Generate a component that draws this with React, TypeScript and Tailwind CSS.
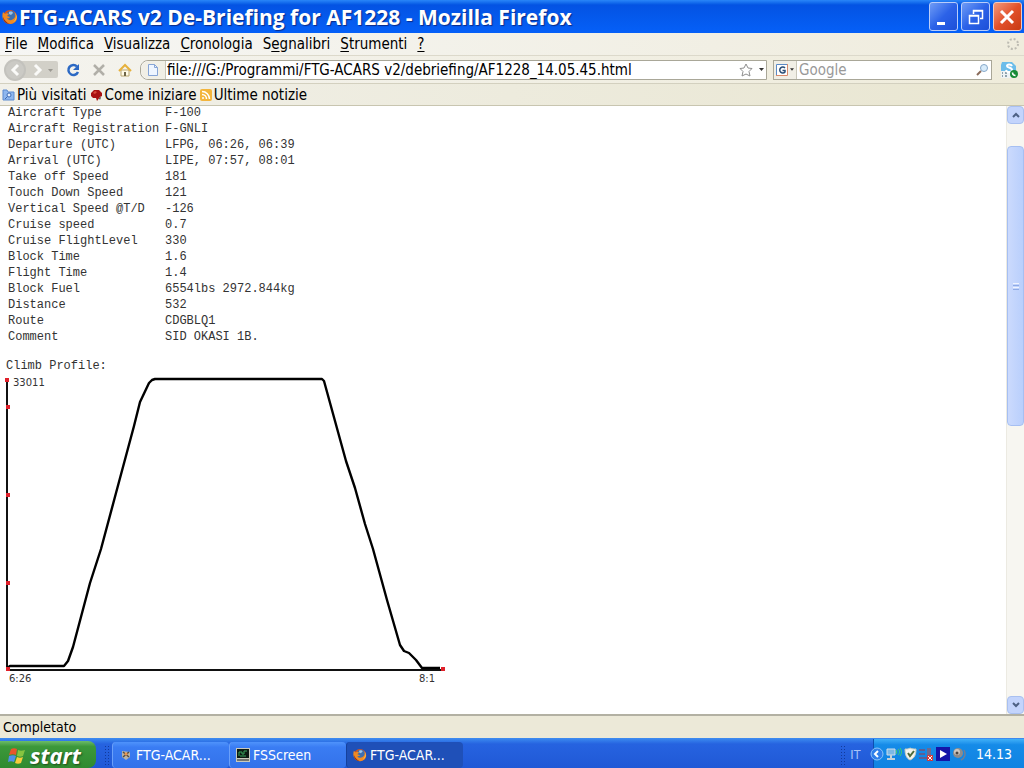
import type { ReactNode } from "react";

const flightData = [
  ["Aircraft Type", "F-100"],
  ["Aircraft Registration", "F-GNLI"],
  ["Departure (UTC)", "LFPG, 06:26, 06:39"],
  ["Arrival (UTC)", "LIPE, 07:57, 08:01"],
  ["Take off Speed", "181"],
  ["Touch Down Speed", "121"],
  ["Vertical Speed @T/D", "-126"],
  ["Cruise speed", "0.7"],
  ["Cruise FlightLevel", "330"],
  ["Block Time", "1.6"],
  ["Flight Time", "1.4"],
  ["Block Fuel", "6554lbs 2972.844kg"],
  ["Distance", "532"],
  ["Route", "CDGBLQ1"],
  ["Comment", "SID OKASI 1B."],
];

const menus = ["File", "Modifica", "Visualizza", "Cronologia", "Segnalibri", "Strumenti", "?"];
const accessKeys = [0, 0, 0, 0, 1, 0, 0];

const markers = [
  [3, 6],
  [4, 33],
  [4, 121],
  [4, 209],
  [4, 295],
  [439, 295],
];

function FirefoxIcon({ className }: { className: string }) {
  return (
    <svg viewBox="0 0 16 16" className={className} aria-hidden="true">
      <circle cx="8" cy="8" r="7" fill="#d9541a" />
      <circle cx="9" cy="7" r="5" fill="#3d6fb0" />
      <path d="M7 3c2-1 4 0 4 1L9 6 7 5z" fill="#9cc4e8" />
      <path d="M1 3l2 2c1-1 3-1 4 0L5 7c1 0 2 1 3 1-1 2-3 1-3 1 1 3 6 3 8-1 1-2 0-4-1-5 3 2 4 6 2 9-3 4-9 4-12 0C0 9 0 6 1 3z" fill="#f08a24" />
      <path d="M13 4c2 3 1 7-2 9 3-1 5-5 2-9z" fill="#ffd65a" />
      <path d="M1 8c0 4 3 7 7 7-3-1-6-4-7-7z" fill="#8e2a12" />
    </svg>
  );
}

function TitleBar() {
  return (
    <header className="flex h-[33px] shrink-0 items-center bg-linear-to-b from-[#2a86f8] via-[#0453e3] via-15% to-[#0560f8] pl-0.5 pr-1">
      <FirefoxIcon className="size-4 shrink-0" />
      <h1 className="min-w-0 flex-1 truncate pl-px font-['Open_Sans','Noto_Sans',sans-serif] text-[21px] leading-8 font-bold text-white [text-shadow:1px_1px_1px_#0a2a88]">
        FTG-ACARS v2 De-Briefing for AF1228 - Mozilla Firefox
      </h1>
      <div className="-mr-0.5 flex gap-[3px]">
        <button aria-label="Riduci a icona" className="size-[29px] rounded-[3px] border border-[#b9cdfa] bg-linear-to-br from-[#6f9bf5] via-[#2c62e8] to-[#1c4fd8]">
          <svg viewBox="0 0 27 27" className="size-full"><path d="M7 19h8v3H7z" fill="#fff" /></svg>
        </button>
        <button aria-label="Ripristina" className="size-[29px] rounded-[3px] border border-[#b9cdfa] bg-linear-to-br from-[#6f9bf5] via-[#2c62e8] to-[#1c4fd8]">
          <svg viewBox="0 0 27 27" className="size-full" fill="none" stroke="#fff">
            <path d="M11.500 11V7.500h9v8H18M11 8h10" strokeWidth="1.500" />
            <path d="M7.500 12.500h9v8h-9zM7 13h10" strokeWidth="1.500" />
          </svg>
        </button>
        <button aria-label="Chiudi" className="size-[29px] rounded-[3px] border border-[#f3c9bd] bg-linear-to-br from-[#f0977a] via-[#e2512a] to-[#c83a12]">
          <svg viewBox="0 0 27 27" className="size-full"><path d="M7 8l12 12M19 8L7 20" stroke="#fff" strokeWidth="3" /></svg>
        </button>
      </div>
    </header>
  );
}

function MenuBar() {
  return (
    <nav className="flex h-[23px] shrink-0 items-center justify-between border-b border-[#dcd9cb] bg-linear-to-r from-[#f6f6f4] to-[#efecdd] pr-1 pl-[5px]">
      <div className="flex gap-2.5">
        {menus.map((label, i) => (
          <button key={label}>
            {label.slice(0, accessKeys[i])}
            <span className="underline underline-offset-2">{label[accessKeys[i]]}</span>
            {label.slice(accessKeys[i] + 1)}
          </button>
        ))}
      </div>
      <svg viewBox="0 0 14 14" className="size-[14px]" aria-hidden="true">
        <circle cx="7" cy="7" r="5" fill="none" stroke="#bdbbb2" strokeWidth="2" strokeDasharray="2 1.930" />
      </svg>
    </nav>
  );
}

function BackForward() {
  return (
    <div className="relative flex h-[22px] w-[56px] shrink-0 items-center">
      <svg viewBox="0 0 56 22" className="size-full" aria-hidden="true">
        <rect x="6" y="2" width="50" height="17" rx="2" fill="#d2d0c8" />
        <circle cx="13" cy="11" r="11" fill="#c3c2bd" />
        <circle cx="13" cy="11" r="9" fill="#cbcac5" />
        <path d="M16 6l-5 5 5 5M33 6l5 5-5 5" fill="none" stroke="#fafaf8" strokeWidth="3" />
        <path d="M46 10h5l-2.500 3z" fill="#9b9992" />
      </svg>
      <button aria-label="Indietro" className="absolute inset-y-0 left-0 w-6" />
      <button aria-label="Avanti" className="absolute inset-y-0 left-7 w-7" />
    </div>
  );
}

function NavBar() {
  return (
    <div className="flex h-[28px] shrink-0 items-center border-b border-[#d3d0bf] bg-linear-to-r from-[#f4f3ee] to-[#efecdb] pr-1.5 pl-0.5">
      <BackForward />
      <button aria-label="Ricarica" className="ml-2">
        <svg viewBox="0 0 14 14" className="size-[14px]">
          <path d="M11 3.500A5 5 0 1 0 12 9" fill="none" stroke="#2c69c4" strokeWidth="2.500" />
          <path d="M13 1v6H7z" fill="#2c69c4" />
        </svg>
      </button>
      <button aria-label="Ferma" className="ml-3">
        <svg viewBox="0 0 14 14" className="size-[14px]"><path d="M2 2l10 10M12 2L2 12" stroke="#b1afa8" strokeWidth="2.500" /></svg>
      </button>
      <button aria-label="Pagina iniziale" className="ml-3">
        <svg viewBox="0 0 14 14" className="size-[14px]">
          <path d="M3 7h8v6H3z" fill="#fffbe8" stroke="#b9a671" />
          <path d="M1 8l6-6 6 6" fill="none" stroke="#e6b13c" strokeWidth="2" />
          <path d="M6 9h2v4H6z" fill="#6e6548" />
        </svg>
      </button>
      <div className="ml-2 flex h-5 min-w-0 flex-1 items-center rounded-l-lg border border-[#a9a798] bg-white">
        <span className="flex h-full w-[25px] shrink-0 items-center justify-center rounded-l-lg border-r border-[#c9c7ba] bg-[#f1efe6]">
          <svg viewBox="0 0 12 14" className="h-[14px] w-3" aria-hidden="true">
            <path d="M1.500 1.500h6l3 3v8h-9z" fill="#eef5ff" stroke="#87a5d6" />
            <path d="M7.500 1.500v3h3" fill="none" stroke="#87a5d6" />
          </svg>
        </span>
        <input
          aria-label="Indirizzo"
          defaultValue="file:///G:/Programmi/FTG-ACARS v2/debriefing/AF1228_14.05.45.html"
          className="h-full min-w-0 flex-1 bg-transparent pl-px outline-none"
        />
        <button aria-label="Aggiungi ai segnalibri">
          <svg viewBox="0 0 14 14" className="size-[14px]">
            <path d="M7 1l2 4 4 .5-3 3 1 4.500-4-2-4 2 1-4.500-3-3L5 5z" fill="#fff" stroke="#8e8e8e" />
          </svg>
        </button>
        <button aria-label="Cronologia indirizzi" className="pr-0.5 pl-1.5">
          <svg viewBox="0 0 5 3" className="h-[3px] w-[5px]"><path d="M0 0h5L2.500 3z" fill="#333" /></svg>
        </button>
      </div>
      <div className="ml-1.5 flex h-5 w-[219px] shrink-0 items-center border border-[#a9a798] bg-white">
        <button aria-label="Motore di ricerca" className="flex h-full w-[23px] shrink-0 items-center gap-0.5 border-r border-[#c9c7ba] bg-[#f1efe6] pl-0.5">
          <svg viewBox="0 0 12 12" className="size-3">
            <path d="M0 0h12v12H0z" fill="#fff" />
            <path d="M.5 12V.5H12" fill="none" stroke="#5b8ac6" />
            <path d="M11.500 0v11.500H0" fill="none" stroke="#d98a6a" />
            <path d="M9 4a3 3 0 1 0 0 4V6.500H6.500" fill="none" stroke="#2b4f78" strokeWidth="1.500" />
          </svg>
          <svg viewBox="0 0 5 3" className="h-[3px] w-1"><path d="M0 0h5L2.500 3z" fill="#333" /></svg>
        </button>
        <input aria-label="Cerca" placeholder="Google" className="h-full min-w-0 flex-1 pl-0.5 outline-none placeholder:text-[#999]" />
        <button aria-label="Avvia ricerca" className="pr-0.5">
          <svg viewBox="0 0 13 13" className="size-[13px]">
            <path d="M1 12l4-4" stroke="#8a6a5a" strokeWidth="2" />
            <circle cx="8" cy="5" r="3.500" fill="#d8ecfb" stroke="#86a8c9" />
          </svg>
        </button>
      </div>
      <button aria-label="Skype" className="ml-2">
        <svg viewBox="0 0 18 18" className="size-[18px]">
          <path d="M2 1h10l4 4v8l-3 3H5l-4-4V4z" fill="#6cbdea" />
          <path d="M1 10h10v7H1z" fill="#eef3f5" />
          <path d="M2 12h1M5 12h2M2 15h1M5 15h2" stroke="#8fa3ad" strokeWidth="2" />
          <path d="M12 5c-1-2-5-2-5 0s5 1 5 4-5 3-6 0" fill="none" stroke="#fff" strokeWidth="2" />
          <circle cx="14" cy="13" r="4" fill="#178a35" />
          <path d="M12.500 11.500c0 2 1 3 3 3" fill="none" stroke="#fff" strokeWidth="1.500" />
        </svg>
      </button>
    </div>
  );
}

function BookmarksBar() {
  return (
    <div className="flex h-[22px] shrink-0 items-center gap-[3px] border-b border-[#c8c5b0] bg-linear-to-r from-[#f1f0e9] to-[#e9e6d1] pl-0.5">
      <a href="#piu-visitati" className="flex items-center gap-0.5">
        <svg viewBox="0 0 13 12" className="h-3 w-[13px]" aria-hidden="true">
          <path d="M1 1h4l1 2h6v8H1z" fill="#8fb7ee" stroke="#5c8bd0" />
          <circle cx="7" cy="6" r="2" fill="#e5f0ff" stroke="#3f6cb4" />
          <path d="M5.500 7.500L3 10" stroke="#3f6cb4" />
        </svg>
        Più visitati
      </a>
      <a href="#come-iniziare" className="flex items-center gap-0.5">
        <svg viewBox="0 0 13 12" className="h-3 w-[13px]" aria-hidden="true">
          <path d="M1 4l3-3h5l3 3v3l-2 1-3 4-1-3H3L1 7z" fill="#a81212" />
          <path d="M3 4l2-2 2 1-2 2z" fill="#d84a3a" />
          <path d="M9 9l2-1-1 3z" fill="#333" />
        </svg>
        Come iniziare
      </a>
      <a href="#ultime-notizie" className="flex items-center gap-0.5">
        <svg viewBox="0 0 12 12" className="size-3" aria-hidden="true">
          <rect width="12" height="12" rx="2" fill="#f3b53d" />
          <circle cx="3" cy="9" r="1" fill="#fff" />
          <path d="M2 5.500a4.500 4.500 0 0 1 4.500 4.500M2 2.500a7.500 7.500 0 0 1 7.500 7.500" fill="none" stroke="#fff" strokeWidth="1.500" />
        </svg>
        Ultime notizie
      </a>
    </div>
  );
}

function ClimbProfile() {
  return (
    <svg viewBox="0 0 444 314" className="ml-1 block h-[314px] w-[444px]" role="img" aria-label="Climb Profile">
      <path d="M3 6v290h434" fill="none" stroke="#111" strokeWidth="2" />
      <polyline
        points="3,294 6,292 60,292 64,287 69,273 86,209 97,175 112,119 130,52 136,28 145,9 148,6 151,5 318,5 320,7 342,87 351,114 361,150 369,175 383,226 396,271 400,277 405,279 412,286 418,294 436,294"
        fill="none"
        stroke="#000"
        strokeWidth="2.400"
        strokeLinejoin="round"
      />
      {markers.map(([x, y]) => (
        <rect key={`${x}-${y}`} x={x - 2} y={y - 2} width="4" height="4" fill="#e0202a" />
      ))}
      <g fill="#333" className="font-['DejaVu_Sans',sans-serif] text-[10px]">
        <text x="9" y="12">33011</text>
        <text x="5" y="308">6:26</text>
        <text x="415" y="308">8:1</text>
      </g>
    </svg>
  );
}

function ScrollButton({ label, d }: { label: string; d: string }) {
  return (
    <button aria-label={label} className="flex h-[18px] w-full shrink-0 items-center justify-center rounded-sm border border-[#a9c0f0] bg-[#c3d4fc]">
      <svg viewBox="0 0 8 6" className="h-1.5 w-2"><path d={d} fill="none" stroke="#4d6185" strokeWidth="2" /></svg>
    </button>
  );
}

function Page() {
  return (
    <div className="flex min-h-0 flex-1 bg-white">
      <main className="min-w-0 flex-1 overflow-hidden font-['Liberation_Mono',monospace] text-xs text-[#333]">
        <table className="-mt-px ml-2 border-collapse">
          <tbody>
            {flightData.map(([label, value]) => (
              <tr key={label}>
                <th scope="row" className="w-[157px] p-0 text-left font-normal whitespace-nowrap">{label}</th>
                <td className="p-0 whitespace-nowrap">{value}</td>
              </tr>
            ))}
          </tbody>
        </table>
        <h2 className="mt-[13px] ml-1.5">Climb Profile:</h2>
        <ClimbProfile />
      </main>
      <div className="flex w-[18px] shrink-0 flex-col border-l border-[#eceae2] bg-[#f7f6f1]">
        <ScrollButton label="Scorri su" d="M1 5l3-3 3 3" />
        <div className="flex flex-1 flex-col pt-[22px]">
          <div className="flex h-[280px] flex-col items-center justify-center gap-px rounded-sm border border-[#a6bff2] bg-linear-to-r from-[#cbdafd] to-[#b9cffc]">
            <span className="h-px w-1.5 bg-[#eef3ff]" />
            <span className="h-px w-1.5 bg-[#8fabe6]" />
            <span className="h-px w-1.5 bg-[#eef3ff]" />
            <span className="h-px w-1.5 bg-[#8fabe6]" />
          </div>
        </div>
        <ScrollButton label="Scorri giù" d="M1 1l3 3 3-3" />
      </div>
    </div>
  );
}

function TaskButton({ icon, label, active = false }: { icon: ReactNode; label: string; active?: boolean }) {
  return (
    <button
      className={`flex h-[26px] w-[117px] items-center gap-[3px] rounded-sm border-l pl-1.5 text-white ${
        active ? "border-[#15409c] bg-[#1f50b8]" : "border-[#6aa0fa] bg-linear-to-b from-[#4f93fb] via-[#3a7cf3] via-20% to-[#3372ea]"
      }`}
    >
      {icon}
      {label}
    </button>
  );
}

function Grip() {
  return <span className="h-5 w-1.5 bg-[radial-gradient(#123a9c_1px,transparent_1px)] bg-size-[3px_3px]" />;
}

function TaskBar() {
  return (
    <footer className="flex h-[30px] shrink-0 items-end bg-linear-to-b from-[#3f8cf0] via-[#2663e0] via-20% to-[#2058d6] text-sm">
      <button className="flex h-[27px] w-[96px] shrink-0 items-center gap-1 rounded-r-lg bg-linear-to-b from-[#6cbb68] via-[#3c983a] via-20% to-[#2f8a30] pl-2 font-['Open_Sans','Noto_Sans',sans-serif] text-[22px] leading-6 font-bold text-white italic [text-shadow:1px_1px_2px_#1c4a1c]">
        <svg viewBox="0 0 18 18" className="size-[18px]" aria-hidden="true">
          <path d="M3 3c2-1 4-1 6 0L8 9C6 8 4 8 1 9z" fill="#e8562a" />
          <path d="M10 4c2 1 4 1 7 0l-2 6c-2 1-4 1-6 0z" fill="#86c440" />
          <path d="M1 10c3-1 5-1 7 0l-2 6c-2-1-4-1-6 0z" fill="#4f8fe8" />
          <path d="M9 11c2 1 4 1 6 0l-2 6c-2 1-4 1-6 0z" fill="#f6cc3c" />
        </svg>
        start
      </button>
      <div className="flex h-[27px] min-w-0 flex-1 items-center pl-2">
        <Grip />
        <div className="ml-0.5 flex">
          <TaskButton
            label="FTG-ACAR..."
            icon={
              <svg viewBox="0 0 12 12" className="mx-px size-3" aria-hidden="true">
                <path d="M2 2l8 1v5l-4 3-4-3z" fill="#b9b4a6" />
                <path d="M3 3l6 5M9 3L3 8" stroke="#544a42" strokeWidth="1.500" />
                <circle cx="6" cy="5" r="1.500" fill="#e8934c" />
              </svg>
            }
          />
          <TaskButton
            label="FSScreen"
            icon={
              <svg viewBox="0 0 14 14" className="size-[14px]" aria-hidden="true">
                <path d="M0 0h14v14H0z" fill="#c9c9bd" />
                <path d="M1 1h12v9H1z" fill="#0c1a12" />
                <path d="M3 8V4h3v2h2V3h3M4 8h6" fill="none" stroke="#38a45c" />
                <path d="M1 12h12" stroke="#222" />
              </svg>
            }
          />
          <TaskButton active label="FTG-ACAR..." icon={<FirefoxIcon className="size-[14px]" />} />
        </div>
      </div>
      <div className="flex h-[27px] items-center gap-1 pr-3 text-[#a9c4f8]">
        <Grip />
        <button className="font-['Liberation_Sans',sans-serif] text-xs">IT</button>
      </div>
      <div className="flex h-[29px] items-center gap-0.5 border-l border-[#0d4fb0] bg-linear-to-b from-[#3fb0f8] via-[#158be8] via-20% to-[#1083e2] pr-3 text-white">
        <button aria-label="Mostra icone nascoste" className="-ml-1">
          <svg viewBox="0 0 14 14" className="size-[14px]">
            <circle cx="7" cy="7" r="6" fill="#2f80ea" stroke="#8cc4fa" />
            <path d="M8 4L5 7l3 3" fill="none" stroke="#fff" strokeWidth="2" />
          </svg>
        </button>
        <svg viewBox="0 0 16 14" className="h-[14px] w-4" aria-hidden="true">
          <path d="M1 2h8v6H1z" fill="#7cb8e6" stroke="#cfdde8" />
          <path d="M1 12h8M5 8v4" stroke="#c3d0d8" strokeWidth="2" />
          <path d="M10 3c1 1 1 3 0 4M12 2c2 2 2 4 0 6M14 1c2 3 2 5 0 8" fill="none" stroke="#3fd070" />
        </svg>
        <svg viewBox="0 0 13 14" className="h-[14px] w-[13px]" aria-hidden="true">
          <path d="M1 2c2 0 4 0 5-1 2 1 4 1 6 1 0 5-1 9-6 11C2 11 1 7 1 2z" fill="#f3f4ee" stroke="#c9ccc0" />
          <path d="M4 6l2 3 4-5" fill="none" stroke="#4c6a3a" strokeWidth="2" />
        </svg>
        <svg viewBox="0 0 15 14" className="h-[14px] w-[15px]" aria-hidden="true">
          <path d="M0 2h6v2H0zM0 6h6v2H0zM0 10h8v2H0z" fill="#5b5f96" />
          <path d="M8 1h4v12H8z" fill="#6b6a92" />
          <path d="M8 8h6v6H8z" fill="#d43a3a" />
          <path d="M9 9l4 4M13 9l-4 4" stroke="#fff" />
        </svg>
        <svg viewBox="0 0 14 14" className="size-[14px]" aria-hidden="true">
          <path d="M0 0h14v14H0z" fill="#1414a8" />
          <path d="M4 3l7 4-7 4z" fill="#fff" />
        </svg>
        <svg viewBox="0 0 14 14" className="size-[14px]" aria-hidden="true">
          <circle cx="6" cy="6" r="5" fill="#8e8c8c" />
          <circle cx="5" cy="5" r="3" fill="#cfc6bd" />
          <circle cx="5" cy="6" r="1.500" fill="#4d4643" />
          <path d="M12 3c2 4 1 8-3 10" fill="none" stroke="#6f7f96" strokeWidth="1.500" />
        </svg>
        <time className="pl-2">14.13</time>
      </div>
    </footer>
  );
}

export default function App() {
  return (
    <div className="flex h-screen flex-col overflow-hidden font-['DejaVu_Sans_Condensed','Noto_Sans',sans-serif] text-[15px] leading-5 text-black">
      <TitleBar />
      <MenuBar />
      <NavBar />
      <BookmarksBar />
      <Page />
      <div className="flex h-6 shrink-0 items-center border-t-2 border-[#b3b1a3] bg-[#ece9d8] pl-[3px] text-sm">
        <span role="status">Completato</span>
      </div>
      <TaskBar />
    </div>
  );
}
